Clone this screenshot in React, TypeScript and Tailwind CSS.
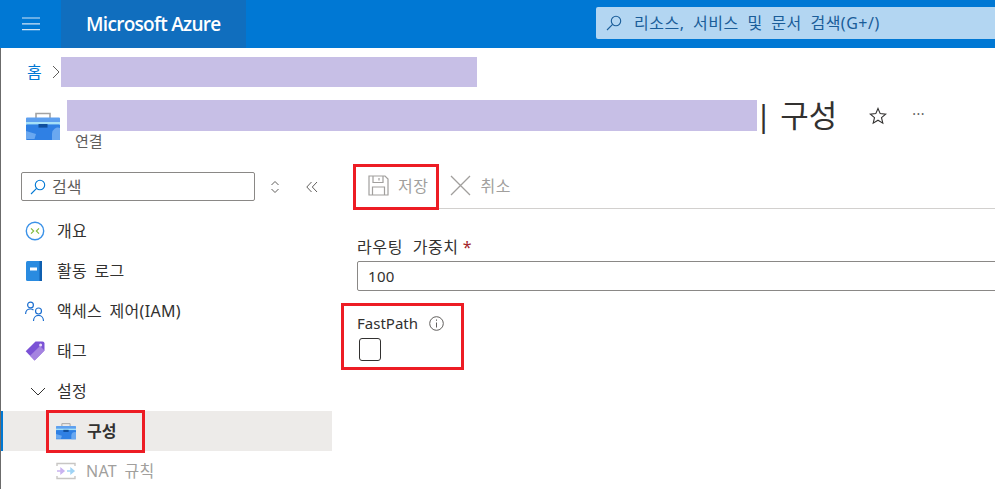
function SearchIcon({ className }: { className: string }) {
  return (
    <svg className={className} viewBox="0 0 16 16" fill="none" stroke="currentColor" strokeWidth={1.1}>
      <circle cx="10" cy="6" r="4.7" />
      <line x1="6.6" y1="9.4" x2="1" y2="15" />
    </svg>
  );
}

function Briefcase({ className }: { className: string }) {
  return (
    <svg className={className} viewBox="0 0 34 30">
      <path d="M10 8V2.500h14V8" fill="none" stroke="#a3a3a3" strokeWidth="1.6" />
      <path d="M0 7.500a1 1 0 0 1 1-1h32a1 1 0 0 1 1 1V13H0z" fill="#5ea0ef" />
      <rect y="13" width="34" height="16" rx="1" fill="#2f80e4" />
      <rect y="11" width="34" height="2.400" fill="#a6e0f7" />
      <rect x="12.500" y="13" width="9" height="3.600" fill="#0f4f9e" />
      <path d="M0 20l10 3-1.500 5H0z" fill="#6aa8f0" />
      <path d="M26 29v-6.500a6 6 0 0 1 8 -5.500V28a1 1 0 0 1-1 1z" fill="#6aa8f0" />
    </svg>
  );
}

function OverviewIcon() {
  return (
    <svg className="w-[20px] h-[20px]" viewBox="0 0 20 20" fill="none">
      <circle cx="10" cy="10" r="8.700" stroke="#3b92e8" strokeWidth="1.400" />
      <path d="M6 7.300 8.700 10 6 12.700" stroke="#7fba3a" strokeWidth="1.100" />
      <path d="M14 7.300 11.300 10l2.700 2.700" stroke="#7fba3a" strokeWidth="1.100" />
    </svg>
  );
}

function LogIcon() {
  return (
    <svg className="w-[18px] h-[20px]" viewBox="0 0 18 20">
      <rect x="1" y="0" width="16" height="20" rx="1.500" fill="#2a8be0" />
      <rect x="14.500" y="0" width="2.500" height="20" fill="#0f5fb0" />
      <rect x="5" y="6.500" width="7" height="3" fill="#ffffff" />
    </svg>
  );
}

function PeopleIcon() {
  return (
    <svg className="w-[20px] h-[20px]" viewBox="0 0 20 20" fill="none" stroke="#1c6fd0" strokeWidth="1.200">
      <circle cx="5.500" cy="4" r="2.900" />
      <path d="M0.600 13c0-3 2-5 4.900-5 1.200 0 2.200.3 3 .9" />
      <circle cx="13.500" cy="10" r="3" />
      <path d="M8.500 20c0-3 2-5.600 5-5.600s5 2.600 5 5.600" />
    </svg>
  );
}

function TagIcon() {
  return (
    <svg className="w-[20px] h-[20px]" viewBox="0 0 20 20">
      <path d="M10.500 0.500h7a2 2 0 0 1 2 2v7L9.600 19.500 0.700 10.300z" fill="#7b52d6" />
      <path d="M5 14.800 15 5l4.500 4.500-9.900 10z" fill="#a583e0" />
      <circle cx="15.600" cy="3.900" r="1.500" fill="#e8ddf8" />
    </svg>
  );
}

function NatIcon() {
  return (
    <svg className="w-[20px] h-[18px]" viewBox="0 0 20 18" fill="none" strokeWidth="1.400">
      <path d="M1 4V1.500h18V4M1 14v2.500h18V14" stroke="#c8c6c4" />
      <path d="M1 9h6M5 6.500 8 9l-3 2.500z" stroke="#c9b3f0" fill="#c9b3f0" />
      <path d="M11 9h6M15 6.500 18 9l-3 2.500z" stroke="#9fd3f5" fill="#9fd3f5" />
    </svg>
  );
}

function NavItem({ icon, label }: { icon: React.ReactNode; label: string }) {
  return (
    <div className="h-10 shrink-0 flex items-center pl-[24px] text-[16px] tracking-[0.3px] [word-spacing:3px] text-[#323130]">
      <span className="w-[32px] shrink-0 flex items-center">{icon}</span>
      {label}
    </div>
  );
}

export default function App() {
  return (
    <div className="w-[995px] h-[489px] overflow-hidden bg-white flex flex-col font-['Noto_Sans','Noto_Sans_CJK_KR',sans-serif]">
      <header className="h-12 shrink-0 bg-[#0078d4] flex items-stretch text-white">
        <div className="w-[61px] flex items-center justify-center">
          <svg className="w-[18px] h-[14px]" viewBox="0 0 18 14" stroke="#cfe4f6" strokeWidth="1.200">
            <path d="M0 1h18M0 6.800h18M0 12.600h18" />
          </svg>
        </div>
        <div className="w-[185px] bg-[#106ebe] flex items-center pl-[25px] text-[19px] font-semibold font-['Open_Sans',sans-serif] tracking-[-0.7px]">
          Microsoft Azure
        </div>
        <div className="flex-1 pl-[350px] pt-[7px]">
          <div className="h-[32px] bg-[#b3d6f2] rounded-l-[2px] flex items-center pl-[10px] text-[16px] tracking-[0.5px] [word-spacing:4px] text-[#1a5d99]">
            <SearchIcon className="w-[16px] h-[16px] mr-[12px]" />
            리소스, 서비스 및 문서 검색(G+/)
          </div>
        </div>
      </header>

      <div className="flex-1 min-h-0 flex flex-col border-l border-[#6b6b6b]">
        <div className="h-[30px] mt-[9px] flex items-center shrink-0">
          <span className="ml-[26px] text-[16px] text-[#0078d4]">홈</span>
          <svg className="w-[8px] h-[14px] ml-[10px]" viewBox="0 0 8 14" fill="none" stroke="#605e5c">
            <path d="M1 1l6 6-6 6" />
          </svg>
          <div className="w-[416px] h-[30px] bg-[#c7bfe6] ml-[1px]" />
        </div>

        <div className="h-[31px] mt-[13px] flex items-center shrink-0">
          <Briefcase className="w-[34px] h-[30px] ml-[25px] mt-[20px] -mr-[26px]" />
          <div className="w-[690px] h-[31px] bg-[#c7bfe6] ml-[33px]" />
          <span className="-ml-[2px] text-[31px] leading-none text-[#323130] whitespace-nowrap">| 구성</span>
          <svg className="w-[18px] h-[18px] ml-[32px]" viewBox="0 0 18 18" fill="none" stroke="#323130" strokeWidth="1.100">
            <path d="M9 1.500l2.200 5.100 5.500.5-4.200 3.600 1.300 5.400L9 13.200l-4.800 2.900 1.300-5.400L1.300 7.100l5.500-.5z" />
          </svg>
          <span className="ml-[25px] text-[14px] leading-none text-[#605e5c] tracking-[0.5px] -mt-[4px]">···</span>
        </div>
        <div className="ml-[74px] h-[20px] text-[15px] leading-[20px] text-[#605e5c] shrink-0">연결</div>

        <div className="flex-1 min-h-0 flex mt-[12px]">
          <aside className="w-[331px] shrink-0 flex flex-col">
            <div className="shrink-0 flex items-center pt-[9px] pb-[10px] pl-[20px]">
              <div className="w-[234px] h-[29px] border border-[#8a8886] rounded-[2px] flex items-center pl-[8px] text-[16px] text-[#605e5c]">
                <SearchIcon className="w-[16px] h-[16px] mr-[6px] text-[#0078d4]" />
                검색
              </div>
              <svg className="w-[10px] h-[14px] ml-[15px]" viewBox="0 0 10 14" fill="none" stroke="#605e5c">
                <path d="M1.500 5 5 1.500 8.500 5M1.500 9 5 12.500 8.500 9" />
              </svg>
              <svg className="w-[12px] h-[12px] ml-[26px]" viewBox="0 0 12 12" fill="none" stroke="#605e5c">
                <path d="M5.500 1 .8 6l4.700 5M11 1 6.300 6l4.700 5" />
              </svg>
            </div>
            <NavItem icon={<OverviewIcon />} label="개요" />
            <NavItem icon={<LogIcon />} label="활동 로그" />
            <NavItem icon={<PeopleIcon />} label="액세스 제어(IAM)" />
            <NavItem icon={<TagIcon />} label="태그" />
            <NavItem
              icon={
                <svg className="w-[16px] h-[9px] ml-[5px]" viewBox="0 0 16 9" fill="none" stroke="#323130">
                  <path d="M1 1l7 7 7-7" />
                </svg>
              }
              label="설정"
            />
            <div className="h-10 shrink-0 bg-[#edebe9] border-l-[2px] border-[#0078d4] flex items-center pl-[53px] text-[16px] font-bold text-[#323130] relative">
              <Briefcase className="w-[20px] h-[18px] mr-[11px]" />
              구성
              <div className="absolute left-[43px] -top-[1px] w-[99px] h-[43px] border-[3px] border-[#ed1c24]" />
            </div>
            <div className="h-10 shrink-0 flex items-center pl-[55px] text-[16px] tracking-[0.3px] [word-spacing:3px] text-[#a19f9d]">
              <span className="mr-[10px] flex"><NatIcon /></span>
              NAT 규칙
            </div>
          </aside>

          <main className="flex-1 min-w-0 flex flex-col">
            <div className="h-[46px] shrink-0 ml-[21px] border-b border-[#d2d0ce] flex items-center pl-[15px] text-[16px] tracking-[0.5px] text-[#a19f9d] relative">
              <svg className="w-[21px] h-[21px] mr-[9px]" viewBox="0 0 21 21" fill="none" stroke="#a19f9d" strokeWidth="1.200">
                <path d="M1 1h16l3 3v16H1z" />
                <path d="M5 1v6.500h10V1M4.500 20v-8h12v8M11 3v2.500" />
              </svg>
              저장
              <svg className="w-[21px] h-[21px] ml-[22px] mr-[9px]" viewBox="0 0 21 21" fill="none" stroke="#a19f9d" strokeWidth="1.300">
                <path d="M1 1l19 19M20 1 1 20" />
              </svg>
              취소
              <div className="absolute left-0 top-[1px] w-[86px] h-[46px] border-[3px] border-[#ed1c24]" />
            </div>

            <div className="pl-[25px] pt-[27px]">
              <div className="h-[22px] flex items-center text-[16px] tracking-[0.6px] [word-spacing:5px] text-[#323130]">
                라우팅 가중치
                <span className="ml-[4px] text-[#a4262c]">*</span>
              </div>
              <div className="h-[30px] mt-[3px] border border-[#8a8886] rounded-l-[2px] -mr-[4px] flex items-center pl-[10px] text-[15px] tracking-[0.3px] text-[#323130]">
                100
              </div>
              <div className="relative mt-[21px]">
                <div className="h-[22px] flex items-center text-[15px] text-[#323130]">
                  FastPath
                  <svg className="w-[15px] h-[15px] ml-[11px]" viewBox="0 0 15 15" fill="none" stroke="#605e5c">
                    <circle cx="7.500" cy="7.500" r="6.800" />
                    <path d="M7.500 6.500v5M7.500 3.500v1.300" />
                  </svg>
                </div>
                <div className="w-[22px] h-[23px] mt-[4px] ml-[2px] border border-[#323130] rounded-[3px]" />
                <div className="absolute left-[-16px] top-[-9px] w-[123px] h-[67px] border-[3px] border-[#ed1c24]" />
              </div>
            </div>
          </main>
        </div>
      </div>
    </div>
  );
}
